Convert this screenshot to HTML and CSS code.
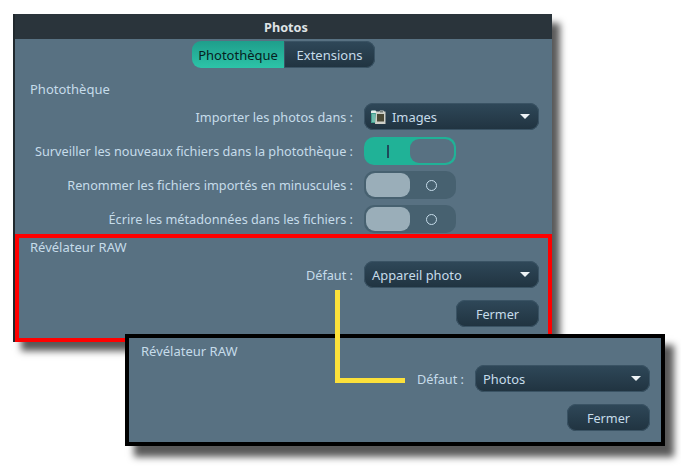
FILE: index.html
```html
<!DOCTYPE html>
<html lang="fr">
<head>
<meta charset="utf-8">
<title>Photos</title>
<link rel="stylesheet" href="styles.css">
</head>
<body>
<main class="window">
  <header class="titlebar">Photos</header>
  <nav class="tabs">
    <span class="tab tab-active">Photothèque</span>
    <span class="tab">Extensions</span>
  </nav>
  <section class="library">
    <h2 class="heading">Photothèque</h2>
    <div class="form">
      <label class="label">Importer les photos dans :</label>
      <div class="combo combo-first">
        <svg class="folder" viewBox="0 0 15 14" width="15" height="14">
          <path d="M0 1.500Q0 .5 1 .5h3.500l1 1.500H8v11H0z" fill="#3f9c8c"/>
          <path d="M0 1.500Q0 .5 1 .5h3.500l1 1.500H8v1H0z" fill="#e6eeec"/>
          <path d="M1 4h3v8H1z" fill="#6fbcae"/>
          <path d="M5 1.500h3.500L9 .5h3.500l.5 1h1.500V14H4z" fill="#cfd0c8"/>
          <rect x="6" y="4" width="7" height="7.500" fill="#4a4936"/>
          <rect x="9" y="1" width="3" height="1.500" fill="#77807c"/>
        </svg>
        <span class="combo-text">Images</span>
        <span class="arrow"></span>
      </div>
      <label class="label">Surveiller les nouveaux fichiers dans la photothèque :</label>
      <div class="switch switch-on"><span class="mark-on"></span><span class="knob knob-on"></span></div>
      <label class="label">Renommer les fichiers importés en minuscules :</label>
      <div class="switch"><span class="knob"></span><span class="mark-off"></span></div>
      <label class="label">Écrire les métadonnées dans les fichiers :</label>
      <div class="switch"><span class="knob"></span><span class="mark-off"></span></div>
    </div>
  </section>
  <section class="raw">
    <h2 class="heading">Révélateur RAW</h2>
    <div class="form">
      <label class="label">Défaut :</label>
      <div class="combo"><span class="combo-text">Appareil photo</span><span class="arrow"></span></div>
    </div>
    <div class="actions"><button class="button">Fermer</button></div>
  </section>
</main>
<div class="red-frame"></div>
<div class="connector-v"></div>
<div class="connector-h"></div>
<aside class="callout">
  <h2 class="heading">Révélateur RAW</h2>
  <div class="form">
    <label class="label">Défaut :</label>
    <div class="combo"><span class="combo-text">Photos</span><span class="arrow"></span></div>
  </div>
  <div class="actions"><button class="button">Fermer</button></div>
</aside>
</body>
</html>
```
FILE: styles.css
```css
* { box-sizing: border-box; }
html, body { margin: 0; height: 466px; overflow: hidden; background: #fff; }
body { position: relative; font: 12.7px/16px "Noto Sans", "Open Sans", sans-serif; color: #c6dcea; }

.window {
  width: 539px;
  height: 328px;
  margin: 14px 0 0 13px;
  background: #587182;
  border-left: 2px solid #20282d;
  box-shadow: 8px 9px 7px rgba(0, 0, 0, .65);
}
.titlebar {
  height: 25px;
  padding-left: 5px;
  background: #2a343b;
  color: #dfe3e5;
  font-weight: 700;
  text-align: center;
  line-height: 27px;
}
.tabs { display: flex; justify-content: center; margin-top: 2px; height: 27px; }
.tab {
  width: 91px;
  font-size: 13px;
  line-height: 29px;
  text-align: center;
  background: linear-gradient(#2f4859, #203340);
  border-radius: 0 9px 9px 0;
  color: #c6dcea;
  box-shadow: inset 0 0 0 1px #3a5364;
}
.tab-active {
  width: 92px;
  background: linear-gradient(#1f9e8b, #2cc4a8);
  border-radius: 9px 0 0 9px;
  color: #06211f;
  box-shadow: none;
}
.heading { margin: 0; font-size: 13px; font-weight: 400; line-height: 18px; }
.library { padding: 12px 13px 0 15px; }
.form {
  display: grid;
  grid-template-columns: 1fr 175px;
  column-gap: 11px;
  row-gap: 6px;
  margin-top: 5px;
  align-items: center;
}
.label { text-align: right; white-space: nowrap; }
.combo {
  display: flex;
  align-items: center;
  height: 27px;
  padding: 0 9px 0 8px;
  border-radius: 9px;
  background: linear-gradient(#2f4859, #203340);
  box-shadow: inset 0 0 0 1px #3a5364;
}
.combo-first { margin-bottom: 1px; }
.folder { margin: 0 6px 0 -1px; flex: none; }
.combo-text { flex: 1; padding-top: 1px; font-size: 12.9px; }
.arrow {
  width: 0;
  height: 0;
  border-left: 5px solid transparent;
  border-right: 5px solid transparent;
  border-top: 5px solid #eef3f6;
}
.switch {
  display: flex;
  align-items: center;
  width: 92px;
  height: 28px;
  padding: 2px;
  border-radius: 10px;
  background: #476170;
}
.switch-on { background: #20b297; }
.knob {
  width: 44px;
  height: 24px;
  border-radius: 9px;
  background: #9aaeb9;
}
.knob-on { background: #587182; margin-left: auto; }
.mark-on { width: 2px; height: 13px; margin-left: 21px; background: #1e4a5a; }
.mark-off {
  width: 11px;
  height: 11px;
  margin-left: 16px;
  border: 1px solid #c6dcea;
  border-radius: 50%;
}
.raw { padding: 5px 13px 0 15px; }
.actions { display: flex; justify-content: flex-end; margin-top: 12px; }
.button {
  width: 83px;
  height: 27px;
  padding: 1px 0 0;
  border: 0;
  border-radius: 9px;
  font: inherit;
  color: #c6dcea;
  background: linear-gradient(#2f4859, #203340);
  box-shadow: inset 0 0 0 1px #3a5364;
}
.red-frame {
  position: absolute;
  left: 15px;
  top: 234px;
  width: 537px;
  height: 108px;
  border: 4px solid #f00;
}
.callout {
  position: absolute;
  left: 125px;
  top: 334px;
  width: 540px;
  height: 112px;
  padding: 4px 11px 0 12px;
  background: #587182;
  border: 4px solid #000;
  box-shadow: 9px 11px 7px rgba(0, 0, 0, .65);
}
.connector-v, .connector-h { position: absolute; background: #fce13a; z-index: 1; }
.connector-v { left: 335px; top: 290px; width: 5px; height: 93px; }
.connector-h { left: 335px; top: 378px; width: 70px; height: 5px; }
```
